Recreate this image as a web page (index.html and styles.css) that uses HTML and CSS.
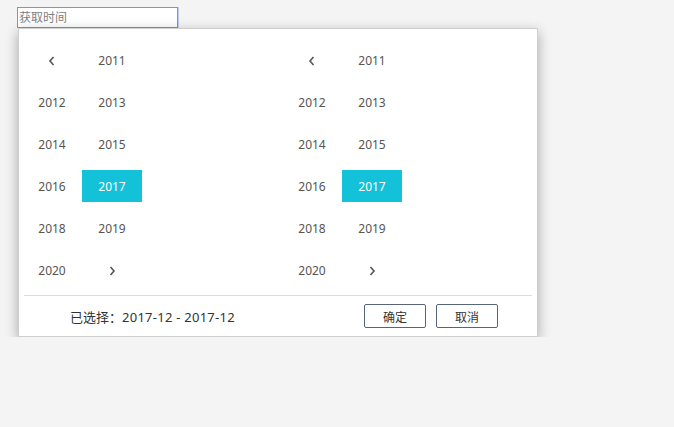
FILE: index.html
```html
<!DOCTYPE html>
<html lang="zh-CN">
<head>
    <meta charset="UTF-8">
    <meta name="viewport" content="width=device-width, initial-scale=1.0">
    <title>年份区间选择</title>
    <link rel="stylesheet" href="styles.css">
</head>
<body>
    <input class="date-input" type="text" placeholder="获取时间">

    <div class="picker">
        <div class="panels">
            <div class="panel">
                <span class="cell"><svg class="arrow" viewBox="0 0 8 10"><path d="M5.5 1 L2 5 L5.5 9"/></svg></span>
                <span class="cell">2011</span>
                <span class="cell">2012</span>
                <span class="cell">2013</span>
                <span class="cell">2014</span>
                <span class="cell">2015</span>
                <span class="cell">2016</span>
                <span class="cell active">2017</span>
                <span class="cell">2018</span>
                <span class="cell">2019</span>
                <span class="cell">2020</span>
                <span class="cell"><svg class="arrow" viewBox="0 0 8 10"><path d="M2.5 1 L6 5 L2.5 9"/></svg></span>
            </div>
            <div class="panel">
                <span class="cell"><svg class="arrow" viewBox="0 0 8 10"><path d="M5.5 1 L2 5 L5.5 9"/></svg></span>
                <span class="cell">2011</span>
                <span class="cell">2012</span>
                <span class="cell">2013</span>
                <span class="cell">2014</span>
                <span class="cell">2015</span>
                <span class="cell">2016</span>
                <span class="cell active">2017</span>
                <span class="cell">2018</span>
                <span class="cell">2019</span>
                <span class="cell">2020</span>
                <span class="cell"><svg class="arrow" viewBox="0 0 8 10"><path d="M2.5 1 L6 5 L2.5 9"/></svg></span>
            </div>
        </div>

        <div class="footer">
            <span class="selected">已选择：<span class="range">2017-12 - 2017-12</span></span>
            <div class="buttons">
                <button class="btn">确定</button>
                <button class="btn">取消</button>
            </div>
        </div>
    </div>
</body>
</html>
```

FILE: styles.css
```css
body {
    margin: 0;
    padding: 7px 0 0 17px;
    background-color: #f4f4f4;
    font-family: "Noto Sans", "Noto Sans CJK SC", sans-serif;
    color: #555;
}
.date-input {
    display: block;
    box-sizing: border-box;
    width: 161px;
    height: 21px;
    margin: 0;
    padding: 0 1px;
    border: 1px solid #6f97e4;
    box-shadow: 1px 0 0 #b9cef5;
    background: #fff;
    font-family: inherit;
    font-size: 12px;
    outline: none;
}
.date-input::placeholder { color: #808080; }
.picker {
    width: 520px;
    box-sizing: border-box;
    margin-left: 1px;
    background: #fff;
    border: 1px solid #cfcfcf;
    box-shadow: 0 4px 12px rgba(0, 0, 0, 0.32);
}
.panels {
    display: flex;
    padding: 15px 0 9px 3px;
}
.panel {
    width: 260px;
    display: grid;
    grid-template-columns: 60px 60px;
    grid-auto-rows: 32px;
    row-gap: 10px;
}
.panel:last-child { width: auto; flex: 1; }
.cell {
    display: flex;
    align-items: center;
    justify-content: center;
    padding-top: 1px;
    font-size: 12px;
    line-height: 1;
    color: #555;
}
.cell.active {
    background-color: #13c2d9;
    color: #fff;
}
.arrow {
    width: 8px;
    height: 10px;
    fill: none;
    stroke: #555;
    stroke-width: 1.6;
}
.footer {
    display: flex;
    align-items: center;
    justify-content: space-between;
    margin: 0 5px;
    padding: 8px 0;
    border-top: 1px solid #dcdcdc;
}
.selected {
    margin-left: 46px;
    font-size: 13px;
    color: #333;
}
.range { letter-spacing: 0.25px; }
.buttons {
    display: flex;
    gap: 10px;
    margin-right: 34px;
}
.btn {
    width: 62px;
    height: 24px;
    padding: 0;
    border: 1px solid #56657a;
    border-radius: 2px;
    background: #fff;
    font-family: "Noto Sans CJK SC", sans-serif;
    font-size: 12px;
    color: #333;
}
```
